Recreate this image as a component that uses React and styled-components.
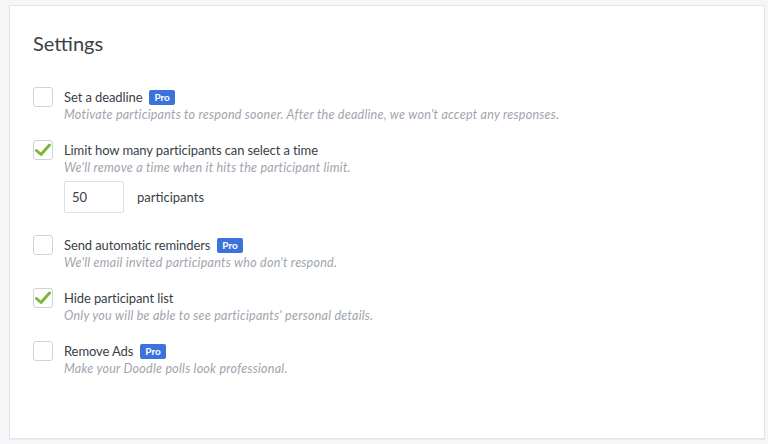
import styled, { createGlobalStyle } from "styled-components";

const Global = createGlobalStyle`
  html, body {
    margin: 0;
    padding: 0;
    background: #f5f6f8;
  }
  body {
    font-family: Lato, "Noto Sans", sans-serif;
    color: #3a3f47;
  }
`;

const Page = styled.div`
  padding: 5px 3px 5px 9px;
  height: 444px;
  box-sizing: border-box;
`;

const Card = styled.div`
  background: #fff;
  border: 1px solid #e4e6ea;
  box-shadow: 0 1px 1px rgba(0, 0, 0, 0.04);
  height: 434px;
  box-sizing: border-box;
  padding: 25px 23px;
`;

const Title = styled.h2`
  margin: 0 0 32px;
  font-size: 20px;
  font-weight: 400;
  line-height: 24px;
  color: #3a3f47;
`;

const List = styled.div`
  display: flex;
  flex-direction: column;
  gap: 16px;
`;

const Row = styled.div`
  display: flex;
  align-items: flex-start;
  gap: 11px;
`;

const Box = styled.div`
  flex: none;
  width: 20px;
  height: 20px;
  box-sizing: border-box;
  border: 1px solid #cfd3d9;
  border-radius: 3px;
  background: #fff;
  display: flex;
  align-items: center;
  justify-content: center;
`;

const Body = styled.div`
  display: flex;
  flex-direction: column;
`;

const Label = styled.div`
  display: flex;
  align-items: center;
  gap: 7px;
  font-size: 13px;
  line-height: 18px;
  letter-spacing: -0.1px;
  color: #3a3f47;
  margin-top: 1px;
`;

const Pro = styled.span`
  background: #3b73db;
  color: #fff;
  font-size: 10px;
  font-weight: 700;
  line-height: 15px;
  letter-spacing: 0;
  padding: 0 5px;
  border-radius: 2px;
`;

const Desc = styled.div`
  font-size: 12.5px;
  font-style: italic;
  line-height: 18px;
  color: #a0a5ad;
  letter-spacing: 0.25px;
`;

const LimitRow = styled.div`
  display: flex;
  align-items: center;
  gap: 13px;
  margin-top: 4px;
  margin-bottom: 6px;
  font-size: 13px;
  color: #3a3f47;
`;

const NumberInput = styled.div`
  width: 60px;
  height: 32px;
  box-sizing: border-box;
  border: 1px solid #dcdfe4;
  border-radius: 2px;
  padding: 0 7px;
  display: flex;
  align-items: center;
  font-size: 13px;
`;

const Check = () => (
  <svg width="16" height="14" viewBox="0 0 16 14">
    <path
      d="M1.5 7.5 L6 11.5 L14.5 2"
      fill="none"
      stroke="#7bb83a"
      strokeWidth="3"
      strokeLinecap="round"
      strokeLinejoin="round"
    />
  </svg>
);

const settings = [
  {
    label: "Set a deadline",
    pro: true,
    desc: "Motivate participants to respond sooner. After the deadline, we won't accept any responses.",
  },
  {
    label: "Limit how many participants can select a time",
    checked: true,
    desc: "We'll remove a time when it hits the participant limit.",
    limit: 50,
  },
  {
    label: "Send automatic reminders",
    pro: true,
    desc: "We'll email invited participants who don't respond.",
  },
  {
    label: "Hide participant list",
    checked: true,
    desc: "Only you will be able to see participants' personal details.",
  },
  {
    label: "Remove Ads",
    pro: true,
    desc: "Make your Doodle polls look professional.",
  },
];

const App = () => {
  return (
    <>
      <Global />
      <Page>
        <Card>
          <Title>Settings</Title>
          <List>
            {settings.map((s) => (
              <Row key={s.label}>
                <Box>{s.checked && <Check />}</Box>
                <Body>
                  <Label>
                    {s.label}
                    {s.pro && <Pro>Pro</Pro>}
                  </Label>
                  <Desc>{s.desc}</Desc>
                  {s.limit && (
                    <LimitRow>
                      <NumberInput>{s.limit}</NumberInput>
                      participants
                    </LimitRow>
                  )}
                </Body>
              </Row>
            ))}
          </List>
        </Card>
      </Page>
    </>
  );
};

export default App;
